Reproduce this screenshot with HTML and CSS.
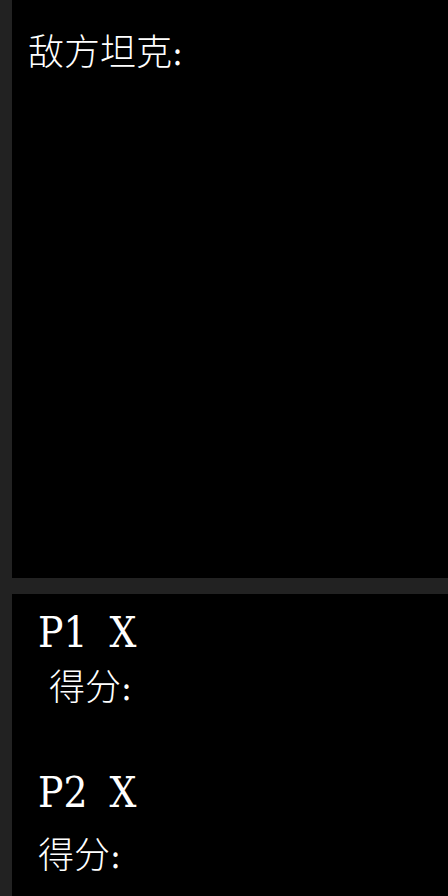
FILE: index.html
```html
<!DOCTYPE html>
<html>
<head>
<meta charset="utf-8">
<link rel="stylesheet" href="styles.css">
</head>
<body>
<div class="page">
  <div class="field">
    <div class="enemy">敌方坦克:</div>
  </div>
  <div class="side">
    <div class="player">P1 X</div>
    <div class="score indent">得分:</div>
    <div class="player p2">P2 X</div>
    <div class="score last">得分:</div>
  </div>
</div>
</body>
</html>
```

FILE: styles.css
```css
html, body {
  margin: 0;
  padding: 0;
  background: #222222;
  color: #ffffff;
}
.page {
  width: 448px;
  height: 896px;
  padding-left: 12px;
  box-sizing: border-box;
  display: flex;
  flex-direction: column;
  gap: 16px;
  overflow: hidden;
  font-family: "DejaVu Serif Condensed", "Noto Sans CJK SC", serif;
  font-weight: 300;
}
.field {
  height: 578px;
  flex: none;
  background: #000;
  padding: 33px 16px 0;
  box-sizing: border-box;
}
.enemy {
  font-size: 36px;
  line-height: 40px;
}
.side {
  flex: 1;
  background: #000;
  padding: 14px 26px 0;
}
.player {
  font-size: 42px;
  line-height: 50px;
  word-spacing: 10px;
}
.score {
  font-size: 36px;
  line-height: 40px;
}
.indent {
  padding-left: 11px;
  margin-top: 10px;
}
.p2 { margin-top: 60px; }
.last { margin-top: 18px; }
```
